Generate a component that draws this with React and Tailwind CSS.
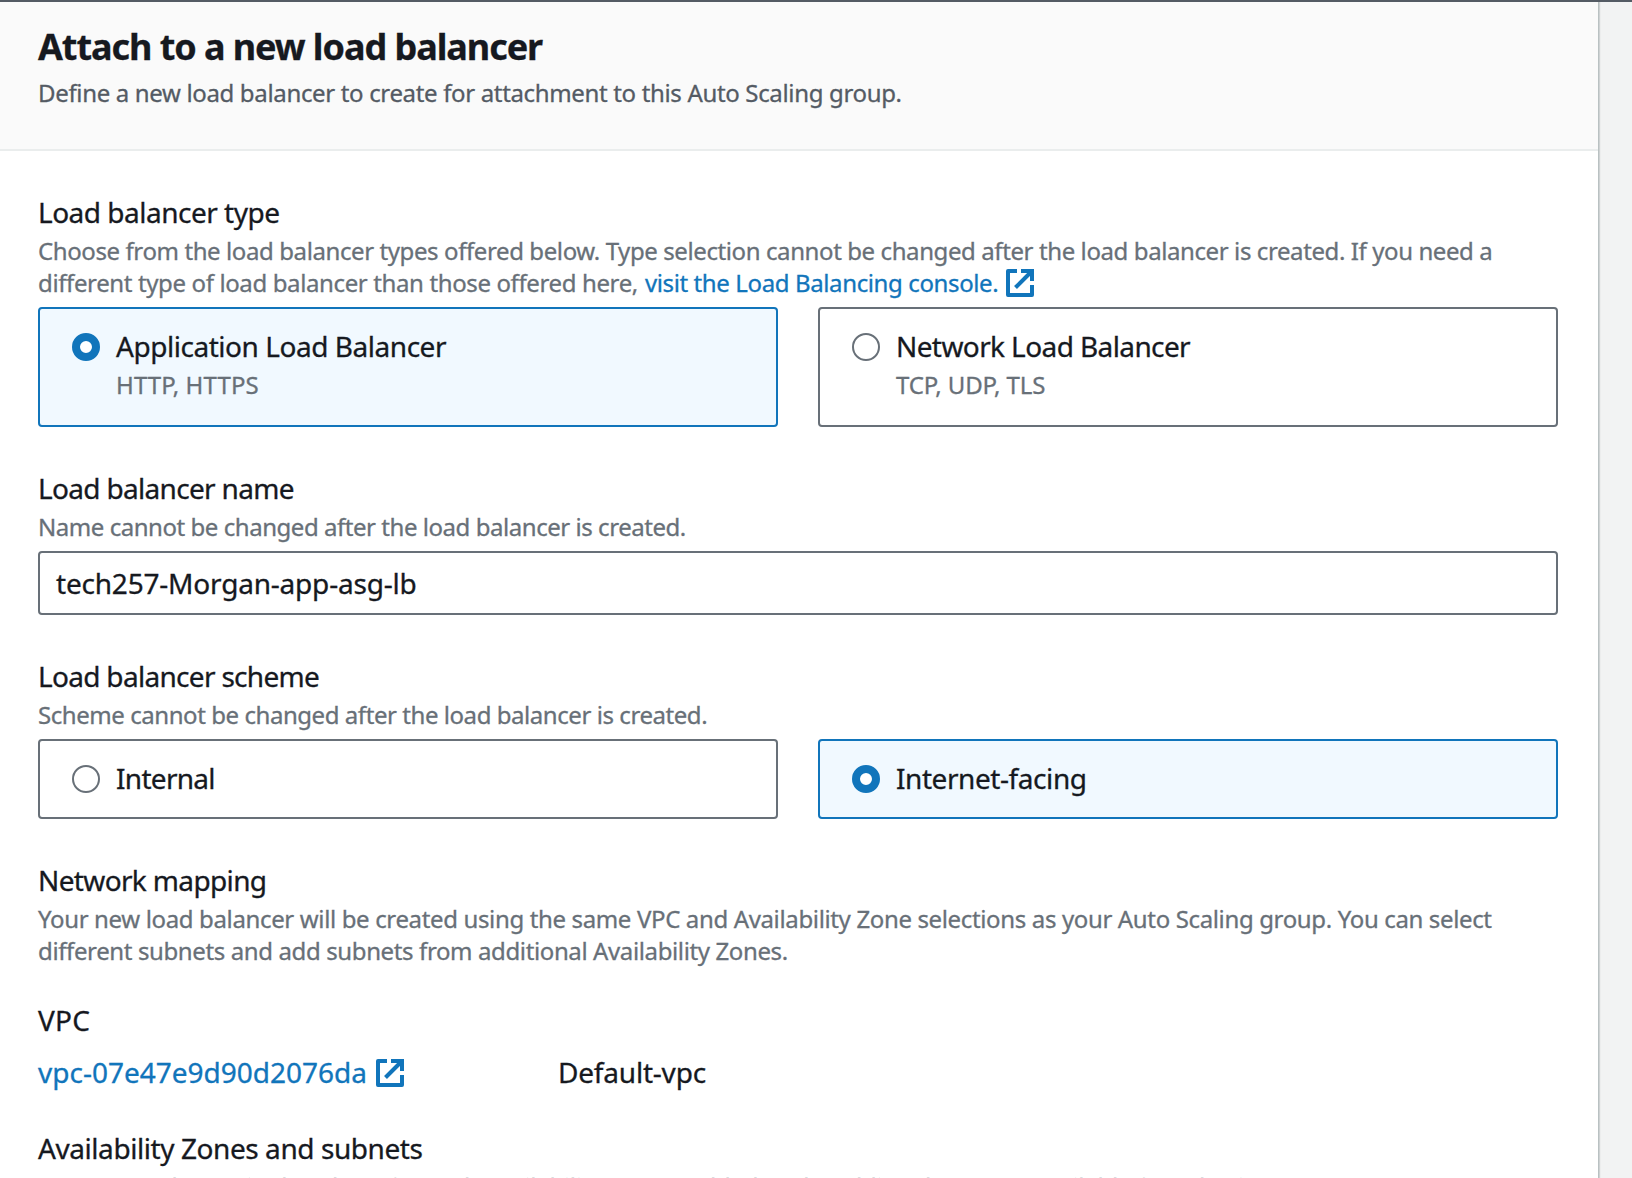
const TEXT = "text-[28px] leading-[44px] text-[#16191f] whitespace-nowrap";
const DESC = "text-[24px] leading-[32px] text-[#687078] whitespace-nowrap";

function ExternalIcon({ className = "" }) {
  return (
    <svg viewBox="0 0 28 28" className={`inline-block size-7 shrink-0 ${className}`} fill="none" stroke="#1175bb" strokeWidth="4" aria-hidden="true">
      <path d="M11 2H2v24h24V16" strokeLinejoin="round" />
      <path d="M15 2h11v10" />
      <path d="M25 3L9.5 18.5" />
    </svg>
  );
}

function Radio({ checked }) {
  return checked ? (
    <span className="size-7 shrink-0 rounded-full border-8 border-[#1175bb] bg-white" />
  ) : (
    <span className="size-7 shrink-0 rounded-full border-2 border-[#687078] bg-white" />
  );
}

function Field({ label, labelTracking, children, className = "" }) {
  return (
    <section className={className}>
      <h2 className={`h-[45px] ${TEXT} ${labelTracking}`}>{label}</h2>
      {children}
    </section>
  );
}

function Tile({ checked, label, labelTracking, detail, detailTracking, className }) {
  return (
    <label
      className={`flex gap-4 rounded-[4px] border-2 px-8 pt-[15px] ${className} ${
        checked ? "border-[#1175bb] bg-[#f1f9ff]" : "border-[#687078] bg-white"
      }`}
    >
      <span className="flex h-[46px] items-center">
        <Radio checked={checked} />
      </span>
      <span className="flex flex-col">
        <span className={`h-[45px] ${TEXT} ${labelTracking}`}>{label}</span>
        {detail && <span className={`${DESC} ${detailTracking}`}>{detail}</span>}
      </span>
    </label>
  );
}

export default function App() {
  return (
    <div className="flex h-[1178px] w-[1632px] flex-col overflow-hidden border-t-2 border-[#545b64] bg-[#f2f3f3] font-['Noto_Sans','Open_Sans',sans-serif] [-webkit-text-stroke:0.3px_currentColor]">
      <main className="h-full w-[1599px] border-r border-[#b9c1c2] bg-white shadow-[1px_0_1px_0_rgba(0,28,36,0.15)]">
        <header className="h-[149px] border-b-2 border-[#eaeded] bg-[#fafafa] pl-[38px] pt-[23px]">
          <h1 className="h-[52px] whitespace-nowrap text-[36px] font-bold leading-[44px] tracking-[-1.06px] text-[#16191f]">
            Attach to a new load balancer
          </h1>
          <p className="whitespace-nowrap text-[24px] leading-[32px] tracking-[-0.34px] text-[#545b64]">
            Define a new load balancer to create for attachment to this Auto Scaling group.
          </p>
        </header>

        <div className="flex flex-col pl-[38px] pr-10 pt-[39px]">
          <Field label="Load balancer type" labelTracking="tracking-[-0.5px]">
            <p className={`${DESC} tracking-[-0.402px]`}>
              Choose from the load balancer types offered below. Type selection cannot be changed after the load balancer is created. If you need a
            </p>
            <p className={`flex items-center ${DESC} tracking-[-0.375px]`}>
              <span>different type of load balancer than those offered here,</span>
              <a className="ml-[7px] flex items-center tracking-[-0.38px] text-[#1175bb]">
                visit the Load Balancing console.
                <ExternalIcon className="ml-2" />
              </a>
            </p>
            <div className="mt-2 grid grid-cols-2 gap-10">
              <Tile checked label="Application Load Balancer" labelTracking="tracking-[-0.46px]" detail="HTTP, HTTPS" detailTracking="tracking-[0.1px]" className="h-[120px]" />
              <Tile label="Network Load Balancer" labelTracking="tracking-[-0.6px]" detail="TCP, UDP, TLS" detailTracking="tracking-[-0.08px]" className="h-[120px]" />
            </div>
          </Field>

          <Field label="Load balancer name" labelTracking="tracking-[-0.68px]" className="mt-[39px]">
            <p className={`${DESC} tracking-[-0.455px]`}>Name cannot be changed after the load balancer is created.</p>
            <div className={`mt-2 flex h-16 items-center rounded-[4px] border-2 border-[#687078] bg-white px-4 ${TEXT} tracking-[-0.2px]`}>
              tech257-Morgan-app-asg-lb
            </div>
          </Field>

          <Field label="Load balancer scheme" labelTracking="tracking-[-0.69px]" className="mt-[39px]">
            <p className={`${DESC} tracking-[-0.44px]`}>Scheme cannot be changed after the load balancer is created.</p>
            <div className="mt-2 grid grid-cols-2 gap-10">
              <Tile label="Internal" labelTracking="tracking-[-0.7px]" className="h-20" />
              <Tile checked label="Internet-facing" labelTracking="tracking-[-0.43px]" className="h-20" />
            </div>
          </Field>

          <Field label="Network mapping" labelTracking="tracking-[-0.64px]" className="mt-[39px]">
            <p className={`${DESC} tracking-[-0.356px]`}>
              Your new load balancer will be created using the same VPC and Availability Zone selections as your Auto Scaling group. You can select
            </p>
            <p className={`${DESC} tracking-[-0.38px]`}>different subnets and add subnets from additional Availability Zones.</p>
          </Field>

          <Field label="VPC" labelTracking="tracking-[0.2px]" className="mt-[31px]">
            <div className={`mt-[7px] grid grid-cols-[520px_1fr] ${TEXT}`}>
              <a className="flex items-center tracking-[0px] text-[#1175bb]">
                vpc-07e47e9d90d2076da
                <ExternalIcon className="ml-[9px] mt-0.5" />
              </a>
              <span className="tracking-[-0.2px]">Default-vpc</span>
            </div>
          </Field>

          <Field label="Availability Zones and subnets" labelTracking="tracking-[-0.43px]" className="mt-8">
            <p className={`${DESC} tracking-[-0.3px]`}>
              You must select a single subnet for each Availability Zone enabled. Only public subnets are available for selection to support DNS
            </p>
          </Field>
        </div>
      </main>
    </div>
  );
}
